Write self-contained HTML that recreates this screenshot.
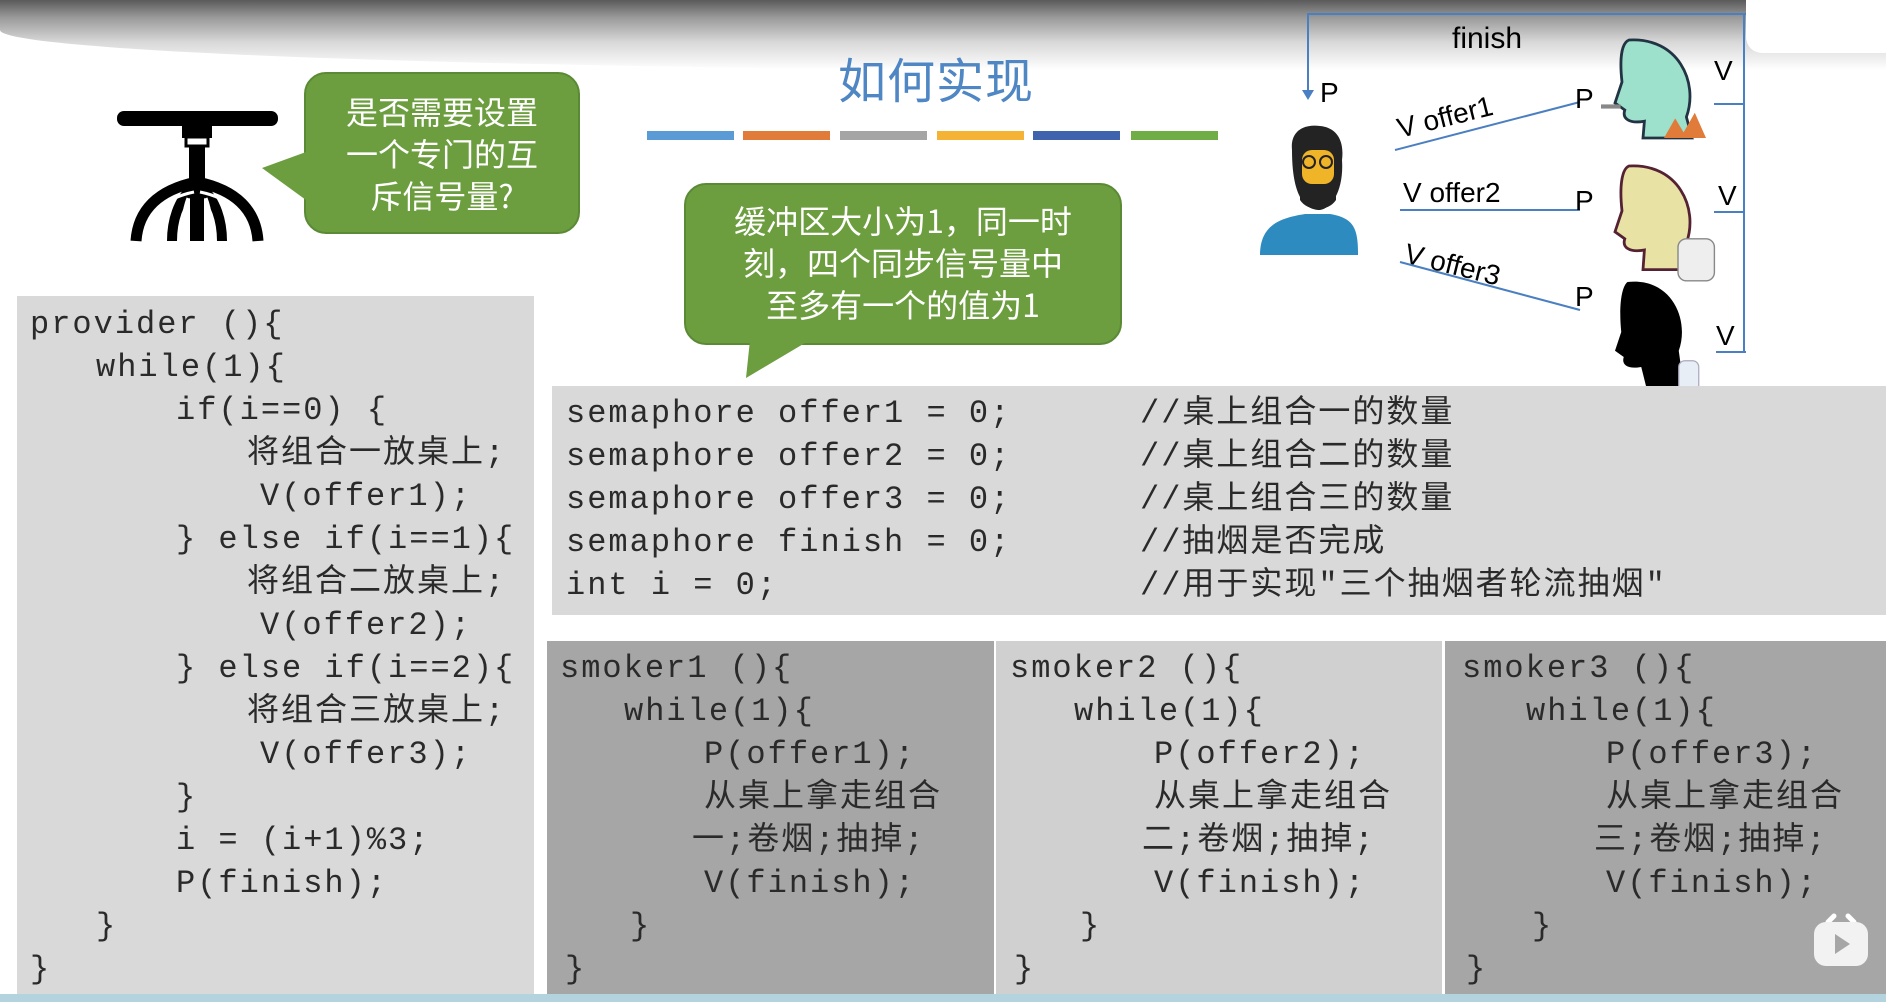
<!DOCTYPE html>
<html><head><meta charset="utf-8"><style>
*{margin:0;padding:0;box-sizing:border-box}
body{width:1886px;height:1002px;overflow:hidden;background:#fff;position:relative;font-family:"Liberation Mono","Noto Sans CJK SC",monospace;}
.top{position:absolute;left:0;top:0;width:1886px;height:70px;background:linear-gradient(#5a5a5a 0%,#9a9a9a 25%,#d8d8d8 60%,#fff 100%);border-bottom-left-radius:60% 40px;}
.box{position:absolute;}
.l{position:absolute;white-space:pre;font-size:32px;letter-spacing:2px;color:#2a2a2a;line-height:43px;}
.bub{position:absolute;background:#6c9d3e;border:2px solid #5a8a35;border-radius:22px;color:#fff;font-family:"Noto Sans CJK SC",sans-serif;font-weight:400;text-align:center;}
.bar{position:absolute;top:131px;height:9px;width:87px}
</style></head><body>
<div class="top"></div>
<div style="position:absolute;left:1746px;top:0;width:150px;height:53px;background:#fff;border-radius:0 0 0 16px"></div>

<!-- stool -->
<svg style="position:absolute;left:112px;top:106px" width="172" height="140" viewBox="0 0 172 140">
<rect x="5" y="5" width="161" height="15" rx="7" fill="#000"/>
<rect x="70" y="20" width="30" height="12" fill="#000"/>
<rect x="74" y="31" width="22" height="9" fill="#fff" stroke="#000" stroke-width="3"/>
<rect x="77" y="40" width="16" height="42" fill="#000"/>
<g fill="none" stroke="#000" stroke-linecap="butt">
<path d="M85 76 C45 84 26 105 24 135" stroke-width="11"/>
<path d="M85 76 C125 84 144 105 146 135" stroke-width="11"/>
<path d="M80 82 C66 95 60 115 60 135" stroke-width="10"/>
<path d="M90 82 C104 95 110 115 110 135" stroke-width="10"/>
<path d="M85 80 V135" stroke-width="14"/>
</g>
<g fill="none" stroke="#fff" stroke-width="3">
<path d="M82 86 C52 92 34 110 33 135"/>
<path d="M88 86 C118 92 136 110 137 135"/>
<path d="M76 92 C71 105 70 120 71 135"/>
<path d="M94 92 C99 105 100 120 99 135"/>
</g>
</svg>

<div class="bub" style="left:304px;top:72px;width:276px;height:162px;font-size:32px;line-height:42px;padding-top:16px">是否需要设置<br>一个专门的互<br>斥信号量?</div>
<svg style="position:absolute;left:258px;top:150px" width="50" height="60"><path d="M48 2 L4 18 L48 50 Z" fill="#6c9d3e"/></svg>

<div style="position:absolute;left:838px;top:42px;font-family:'Noto Sans CJK SC',sans-serif;font-weight:400;font-size:48px;color:#4f86c4;letter-spacing:1px">如何实现</div>
<div class="bar" style="left:647px;background:#5b9bd5"></div>
<div class="bar" style="left:743px;background:#e07b39"></div>
<div class="bar" style="left:840px;background:#a5a5a5"></div>
<div class="bar" style="left:937px;background:#f5b335"></div>
<div class="bar" style="left:1033px;background:#3f63ad"></div>
<div class="bar" style="left:1131px;background:#70ad47"></div>

<div class="bub" style="left:684px;top:183px;width:438px;height:162px;font-size:32px;line-height:42px;padding-top:14px">缓冲区大小为1，同一时<br>刻，四个同步信号量中<br>至多有一个的值为1</div>
<svg style="position:absolute;left:740px;top:340px" width="80" height="40"><path d="M10 0 L6 38 L70 0 Z" fill="#6c9d3e"/></svg>

<!-- diagram -->
<svg style="position:absolute;left:1220px;top:0" width="540" height="390" viewBox="0 0 540 390" font-family="Liberation Sans,sans-serif">
<g stroke="#4a7fc1" stroke-width="2" fill="none">
<path d="M526 14 H88 V92"/>
<path d="M175 150 L360 102"/>
<path d="M180 210 H360"/>
<path d="M180 262 L360 310"/>
<path d="M494 104 H524 M494 212 H524 M496 352 H526 M524 14 V352"/>
</g>
<path d="M82 90 L88 100 L94 90 Z" fill="#4a7fc1"/>
<text x="232" y="48" font-size="30">finish</text>
<text x="100" y="102" font-size="28">P</text>
<text x="355" y="108" font-size="28">P</text>
<text x="355" y="210" font-size="28">P</text>
<text x="355" y="306" font-size="28">P</text>
<text x="180" y="138" font-size="28" transform="rotate(-14 180 138)">V offer1</text>
<text x="183" y="202" font-size="28">V   offer2</text>
<text x="183" y="262" font-size="28" transform="rotate(14 183 262)">V  offer3</text>
<text x="494" y="80" font-size="28">V</text>
<text x="498" y="205" font-size="28">V</text>
<text x="496" y="345" font-size="28">V</text>
<!-- man -->
<path d="M40 255 C40 225 60 218 85 214 L110 214 C135 218 138 230 138 255 Z" fill="#2e8bc0"/>
<path d="M72 150 C70 130 85 124 100 126 C120 128 124 145 122 160 C124 190 112 208 100 210 C84 210 72 195 72 150 Z" fill="#232323"/>
<rect x="82" y="150" width="32" height="34" rx="10" fill="#f0b429"/>
<circle cx="89" cy="162" r="6" fill="none" stroke="#222" stroke-width="2"/><circle cx="106" cy="162" r="6" fill="none" stroke="#222" stroke-width="2"/>
<path d="M80 178 C88 205 108 205 116 178 L116 200 C108 212 88 212 80 200 Z" fill="#232323"/>
<!-- heads -->
<g transform="translate(395,40) scale(1.4) translate(-395,-40)">
<path d="M405 40 C440 38 455 70 446 95 L450 110 H415 L416 98 C405 100 400 96 402 90 L395 85 L400 70 C398 52 400 42 405 40 Z" fill="#9de0cc" stroke="#234" stroke-width="2"/>
<rect x="385" y="86" width="14" height="3" fill="#888"/>
<path d="M430 110 L438 96 L444 106 L452 92 L460 110 Z" fill="#e07b39"/>
</g>
<g transform="translate(395,166) scale(1.4) translate(-395,-166)">
<path d="M405 166 C440 164 455 196 446 221 L450 240 H415 L416 226 C405 228 400 224 402 218 L395 213 L400 198 C398 180 400 168 405 166 Z" fill="#e8e3a5" stroke="#523" stroke-width="2"/>
<rect x="440" y="218" width="26" height="30" rx="6" fill="#eee" stroke="#888"/>
</g>
<g transform="translate(395,282) scale(1.25) translate(-395,-282)">
<path d="M405 282 C440 278 455 312 446 337 L450 366 H420 L416 350 C405 352 400 348 402 342 L395 337 L400 322 C398 302 400 286 405 282 Z" fill="#000"/>
<rect x="446" y="345" width="16" height="30" rx="5" fill="#e8eef5" stroke="#aab"/>
</g>
</svg>

<!-- provider box -->
<div class="box" style="left:17px;top:296px;width:517px;height:706px;background:#d9d9d9"></div>
<div class="l" style="left:30px;top:303px">provider ()&#123;</div>
<div class="l" style="left:96px;top:346px">while(1)&#123;</div>
<div class="l" style="left:176px;top:389px">if(i==0) &#123;</div>
<div class="l" style="left:247px;top:432px">将组合一放桌上;</div>
<div class="l" style="left:260px;top:475px">V(offer1);</div>
<div class="l" style="left:176px;top:518px">} else if(i==1)&#123;</div>
<div class="l" style="left:247px;top:561px">将组合二放桌上;</div>
<div class="l" style="left:260px;top:604px">V(offer2);</div>
<div class="l" style="left:176px;top:647px">} else if(i==2)&#123;</div>
<div class="l" style="left:247px;top:690px">将组合三放桌上;</div>
<div class="l" style="left:260px;top:733px">V(offer3);</div>
<div class="l" style="left:176px;top:776px">}</div>
<div class="l" style="left:176px;top:819px">i = (i+1)%3;</div>
<div class="l" style="left:176px;top:862px">P(finish);</div>
<div class="l" style="left:96px;top:905px">}</div>
<div class="l" style="left:30px;top:948px">}</div>

<!-- semaphore box -->
<div class="box" style="left:552px;top:386px;width:1334px;height:229px;background:#d9d9d9"></div>
<div class="l" style="left:566px;top:392px">semaphore offer1 = 0;</div>
<div class="l" style="left:566px;top:435px">semaphore offer2 = 0;</div>
<div class="l" style="left:566px;top:478px">semaphore offer3 = 0;</div>
<div class="l" style="left:566px;top:521px">semaphore finish = 0;</div>
<div class="l" style="left:566px;top:564px">int i = 0;</div>
<div class="l" style="left:1140px;top:392px">//桌上组合一的数量</div>
<div class="l" style="left:1140px;top:435px">//桌上组合二的数量</div>
<div class="l" style="left:1140px;top:478px">//桌上组合三的数量</div>
<div class="l" style="left:1140px;top:521px">//抽烟是否完成</div>
<div class="l" style="left:1140px;top:564px">//用于实现"三个抽烟者轮流抽烟"</div>

<!-- smokers -->
<div class="box" style="left:547px;top:641px;width:447px;height:361px;background:#a6a6a6"></div>
<div class="box" style="left:996px;top:641px;width:446px;height:361px;background:#d0d0d0"></div>
<div class="box" style="left:1445px;top:641px;width:441px;height:361px;background:#a6a6a6"></div>

<div class="l" style="left:560px;top:647px">smoker1 ()&#123;</div>
<div class="l" style="left:624px;top:690px">while(1)&#123;</div>
<div class="l" style="left:704px;top:733px">P(offer1);</div>
<div class="l" style="left:704px;top:776px">从桌上拿走组合</div>
<div class="l" style="left:692px;top:819px">一;卷烟;抽掉;</div>
<div class="l" style="left:704px;top:862px">V(finish);</div>
<div class="l" style="left:630px;top:905px">}</div>
<div class="l" style="left:565px;top:948px">}</div>

<div class="l" style="left:1010px;top:647px">smoker2 ()&#123;</div>
<div class="l" style="left:1074px;top:690px">while(1)&#123;</div>
<div class="l" style="left:1154px;top:733px">P(offer2);</div>
<div class="l" style="left:1154px;top:776px">从桌上拿走组合</div>
<div class="l" style="left:1142px;top:819px">二;卷烟;抽掉;</div>
<div class="l" style="left:1154px;top:862px">V(finish);</div>
<div class="l" style="left:1080px;top:905px">}</div>
<div class="l" style="left:1014px;top:948px">}</div>

<div class="l" style="left:1462px;top:647px">smoker3 ()&#123;</div>
<div class="l" style="left:1526px;top:690px">while(1)&#123;</div>
<div class="l" style="left:1606px;top:733px">P(offer3);</div>
<div class="l" style="left:1606px;top:776px">从桌上拿走组合</div>
<div class="l" style="left:1594px;top:819px">三;卷烟;抽掉;</div>
<div class="l" style="left:1606px;top:862px">V(finish);</div>
<div class="l" style="left:1532px;top:905px">}</div>
<div class="l" style="left:1466px;top:948px">}</div>

<div style="position:absolute;left:0;top:994px;width:1886px;height:8px;background:#b3d3de"></div>

<!-- bilibili icon -->
<svg style="position:absolute;left:1812px;top:912px" width="58" height="56" viewBox="0 0 58 56">
<path d="M16 10 L22 4 M42 10 L36 4" stroke="#fff" stroke-width="5" stroke-linecap="round"/>
<rect x="2" y="10" width="54" height="44" rx="12" fill="#f2f2f2"/>
<path d="M23 22 L38 32 L23 42 Z" fill="#a6a6a6"/>
</svg>
</body></html>
